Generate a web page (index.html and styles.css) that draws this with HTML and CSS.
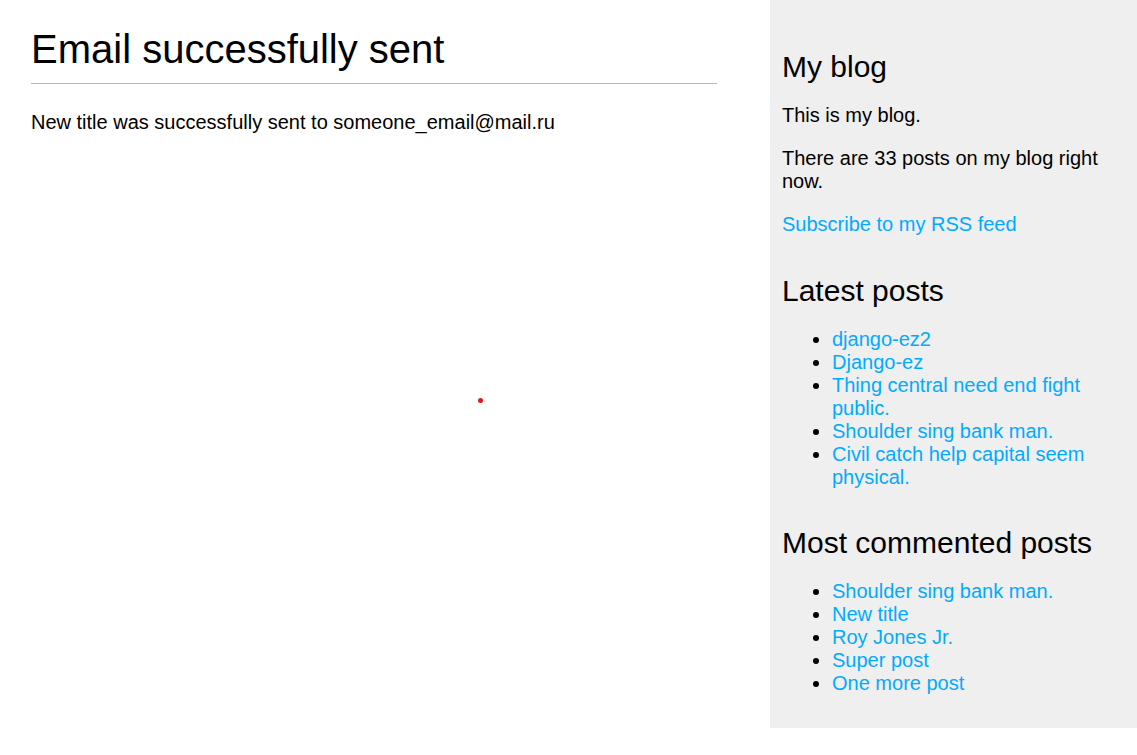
FILE: index.html
```html
<!DOCTYPE html>
<html lang="en">
<head>
<meta charset="utf-8">
<title>Email successfully sent</title>
<link rel="stylesheet" href="styles.css">
</head>
<body>
<div class="page">
  <main class="content">
    <h1 class="title">Email successfully sent</h1>
    <p class="text">New title was successfully sent to someone_email@mail.ru</p>
  </main>
  <aside class="sidebar">
    <h2 class="side-title">My blog</h2>
    <p class="text">This is my blog.</p>
    <p class="text">There are 33 posts on my blog right now.</p>
    <p class="text"><a class="link" href="#">Subscribe to my RSS feed</a></p>
    <h2 class="side-title">Latest posts</h2>
    <ul class="post-list">
      <li><a class="link" href="#">django-ez2</a></li>
      <li><a class="link" href="#">Django-ez</a></li>
      <li><a class="link" href="#">Thing central need end fight public.</a></li>
      <li><a class="link" href="#">Shoulder sing bank man.</a></li>
      <li><a class="link" href="#">Civil catch help capital seem physical.</a></li>
    </ul>
    <h2 class="side-title">Most commented posts</h2>
    <ul class="post-list">
      <li><a class="link" href="#">Shoulder sing bank man.</a></li>
      <li><a class="link" href="#">New title</a></li>
      <li><a class="link" href="#">Roy Jones Jr.</a></li>
      <li><a class="link" href="#">Super post</a></li>
      <li><a class="link" href="#">One more post</a></li>
    </ul>
  </aside>
</div>
<span class="cursor-dot"></span>
</body>
</html>
```
FILE: styles.css
```css
html, body {
  margin: 0;
  padding: 0;
  background: #fff;
}
body {
  font-family: "Liberation Sans", Arial, Helvetica, sans-serif;
  font-size: 20px;
  color: #000;
  position: relative;
  min-height: 755px;
}
.page {
  display: flex;
  align-items: flex-start;
}
.content {
  width: 686px;
  padding-left: 31px;
  flex: none;
}
.title {
  font-size: 40px;
  font-weight: normal;
  margin: 26.5px 0 26.5px;
  padding: 0 0 11.5px;
  border-bottom: 1px solid #bbb;
}
.text {
  margin: 20px 0;
}
.sidebar {
  margin-left: auto;
  width: 367px;
  box-sizing: border-box;
  padding: 12.5px 12px;
  background: #efefef;
  flex: none;
}
.side-title {
  font-size: 30px;
  font-weight: normal;
  margin: 37.5px 0 0;
}
.post-list {
  margin: 20px 0;
  padding-left: 50px;
}
.link {
  color: #00abff;
  text-decoration: none;
}
.cursor-dot {
  position: absolute;
  left: 478px;
  top: 398px;
  width: 5px;
  height: 5px;
  border-radius: 50%;
  background: #e8141c;
}
```
